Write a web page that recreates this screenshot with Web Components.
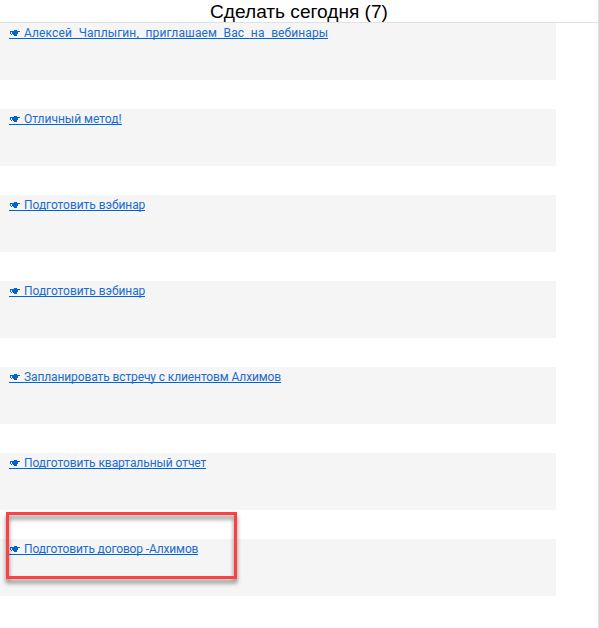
<!DOCTYPE html>
<html lang="ru">
<head>
<meta charset="utf-8">
<title>Сделать сегодня</title>
<style>
html, body { margin: 0; height: 100%; overflow: hidden; background: #fff; }
</style>
</head>
<body>
<task-board heading="Сделать сегодня (7)">
<task-item style="--ls:.12px;--ws:.2px">Алексей&nbsp; Чаплыгин,&nbsp; приглашаем&nbsp; Вас&nbsp; на&nbsp; вебинары</task-item>
<task-item>Отличный метод!</task-item>
<task-item style="--ls:-.05px">Подготовить вэбинар</task-item>
<task-item style="--ls:-.05px">Подготовить вэбинар</task-item>
<task-item style="--ls:-.11px">Запланировать встречу с клиентовм Алхимов</task-item>
<task-item style="--ls:-.07px">Подготовить квартальный отчет</task-item>
<task-item marked style="--ls:-.14px">Подготовить договор -Алхимов</task-item>
</task-board>
<script>
class TaskBoard extends HTMLElement {
  connectedCallback() {
    const root = this.attachShadow({ mode: 'open' });
    root.innerHTML = `<style>
      :host { display: flex; flex-direction: column; box-sizing: border-box; width: 599px; height: 628px; border-right: 1px solid #e1e1e1; overflow: hidden; }
      header { box-sizing: border-box; height: 23px; flex: none; border-bottom: 1px solid #e1e1e1; text-align: center; font: 19.1px/23px "Liberation Sans", Arial, sans-serif; color: #000; white-space: nowrap; }
      main { display: flex; flex-direction: column; gap: 29px; width: 556px; }
    </style><header></header><main><slot></slot></main>`;
    root.querySelector('header').textContent = this.getAttribute('heading');
  }
}
class HandIcon extends HTMLElement {
  connectedCallback() {
    this.attachShadow({ mode: 'open' }).innerHTML = `<style>:host { display: block; width: 10px; height: 6px; } svg { display: block; }</style>
    <svg width="10" height="6" viewBox="0 0 10 6" fill="#0066cc" shape-rendering="crispEdges">
      <path d="M4 0h3v1h-3zM0 1h10v1h-10zM0 2h1v2h-1zM2 2h6v2h-6zM1 4h1v1h-1zM3 4h4v1h-4zM4 5h3v1h-3z"/>
    </svg>`;
  }
}
class TaskItem extends HTMLElement {
  connectedCallback() {
    this.attachShadow({ mode: 'open' }).innerHTML = `<style>
      :host { display: block; position: relative; box-sizing: border-box; height: 57px; padding: 2px 0 0 9px; background: #f5f5f5; }
      a { display: inline-flex; box-sizing: border-box; height: 14px; border-bottom: 1px solid #0066cc; color: #1a6ccf; font: 12px/16px Roboto, sans-serif; letter-spacing: var(--ls, 0); word-spacing: var(--ws, 0); white-space: nowrap; vertical-align: top; }
      hand-icon { margin: 5px 4px 0 1px; flex: none; }
      .frame { display: none; position: absolute; left: 6px; top: -27px; box-sizing: border-box; width: 231px; height: 67px; border: 3px solid #ff4040; filter: drop-shadow(0 4px 2px rgba(0,0,0,.5)); pointer-events: none; }
      :host([marked]) .frame { display: block; }
    </style><a><hand-icon></hand-icon><span><slot></slot></span></a><div class="frame"></div>`;
  }
}
customElements.define('hand-icon', HandIcon);
customElements.define('task-item', TaskItem);
customElements.define('task-board', TaskBoard);
</script>
</body>
</html>
